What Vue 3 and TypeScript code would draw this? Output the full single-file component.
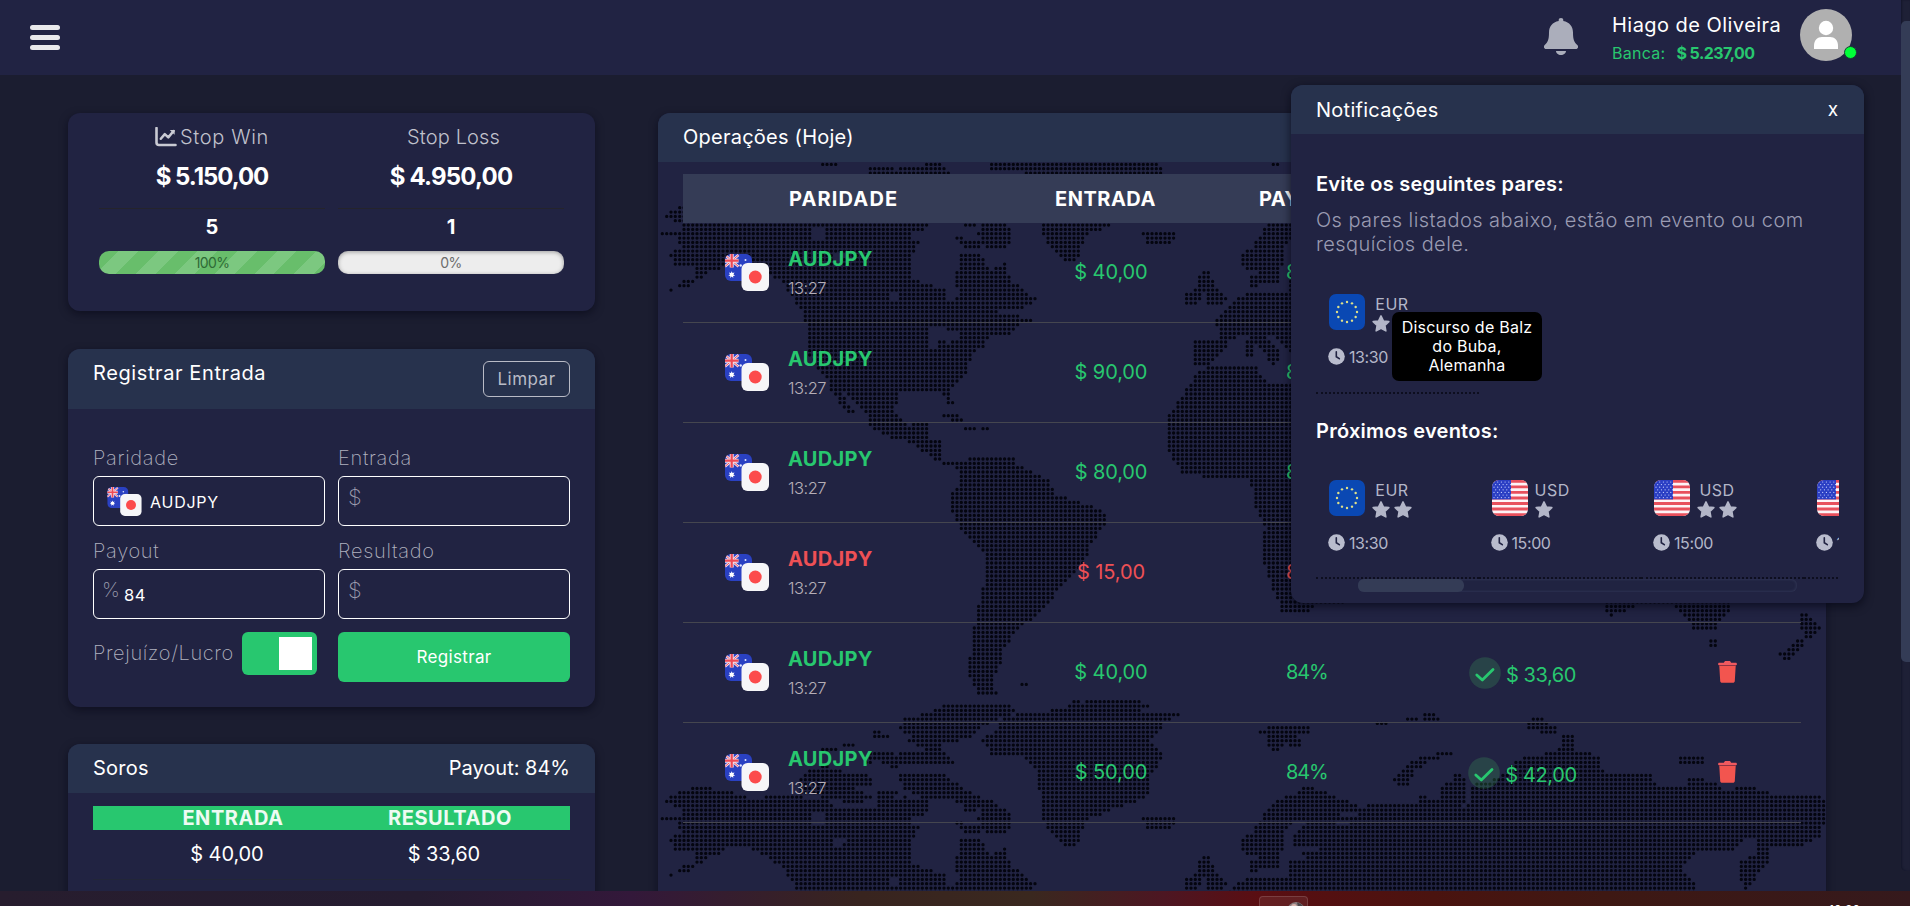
<script setup lang="ts">
type Point = [number, number]

interface Operation {
  entry: string
  payout: string
  result: string
  win: boolean
}

interface MarketEvent {
  currency: 'EUR' | 'USD'
  stars: number
  time: string
}

const operations: Operation[] = [
  { entry: '$ 40,00', payout: '84%', result: '$ 33,60', win: true },
  { entry: '$ 90,00', payout: '84%', result: '$ 75,60', win: true },
  { entry: '$ 80,00', payout: '84%', result: '$ 67,20', win: true },
  { entry: '$ 15,00', payout: '84%', result: '$ 15,00', win: false },
  { entry: '$ 40,00', payout: '84%', result: '$ 33,60', win: true },
  { entry: '$ 50,00', payout: '84%', result: '$ 42,00', win: true },
]

const avoid: MarketEvent[] = [{ currency: 'EUR', stars: 2, time: '13:30' }]
const upcoming: MarketEvent[] = [
  { currency: 'EUR', stars: 2, time: '13:30' },
  { currency: 'USD', stars: 1, time: '15:00' },
  { currency: 'USD', stars: 2, time: '15:00' },
  { currency: 'USD', stars: 2, time: '15:00' },
]

/* Dotted world map: land outlines on a 270 x 135 grid. */
const land: Point[][] = [
  // North America
  [[1.6, 24], [5.8, 21.5], [9, 20.6], [16, 21.5], [22, 23.5], [28, 22.5], [33, 23], [39, 24], [40.5, 26], [47, 26], [53, 24.6], [57, 23], [62, 23.5], [62, 26], [60, 30], [58, 34], [58, 38], [66, 41], [67, 44], [69, 44], [69.6, 41.6], [69, 38.5], [70, 33], [74.5, 33], [76.5, 37], [80, 34.7], [81, 38.5], [85, 41.6], [87, 43], [86, 44.7], [78.5, 46], [83, 47], [89, 49], [84.7, 48], [81, 51], [76.5, 51.6], [75, 54], [72, 56], [71, 60], [67, 64], [68, 68], [66.7, 67], [65.7, 64.3], [59, 64.3], [55, 65], [54.5, 69], [57, 72.4], [61, 71.4], [62.3, 72.4], [62, 75], [65, 76], [64.8, 79.7], [67.7, 80.8], [71.5, 81], [70, 82.3], [65.7, 81], [62.8, 79], [58, 76], [53.6, 75], [49, 72.8], [48.7, 69.7], [44.4, 65.5], [40.5, 62.8], [37.6, 60], [34.7, 56], [34.7, 49], [32.7, 44.7], [28.8, 39.3], [26, 37], [21.6, 34.8], [17, 34], [12.4, 37], [9, 36], [4, 35], [2.8, 32.3], [5.5, 31], [4.7, 29], [0.7, 28.3], [0.7, 27.4], [5.5, 27.4], [5.5, 26]],
  [[39.4, 62.8], [41.5, 64], [43.5, 67], [45.5, 69], [44.5, 69.6], [41, 65.5]],
  // Aleutian islands
  [[8.6, 36.3], [12.4, 36.3], [10.3, 38.4], [8.6, 38.4]],
  [[6.6, 38.5], [8.5, 38.5], [6.5, 40.4], [4.6, 40.4]],
  [[2.5, 40.5], [3.5, 40.5], [3.5, 41.5], [2.5, 41.5]],
  // Arctic archipelago
  [[66.6, 1.6], [81, 1.6], [82, 3.5], [75.5, 6.3], [71.6, 9.4], [67.8, 10.4], [64, 11.4], [67.8, 14.4], [67.8, 15.4], [57.8, 15.4], [56, 12.6], [62, 12.6], [62, 11.4], [56, 10.5], [60, 9.4], [56, 7.6], [57, 4.6], [63.5, 3.5], [64, 2.5]],
  [[33.5, 17.3], [39, 15.8], [44, 17.7], [48.5, 17.3], [49.3, 20.4], [46, 20.4], [44, 21.6], [49.4, 22.4], [49.3, 23.4], [45.5, 24.6], [40, 23.4], [32.4, 22.3]],
  [[55.5, 17.5], [61, 17.5], [66, 18], [71, 21.5], [77, 24], [82, 27.3], [80, 31.5], [76, 31.4], [74, 28.5], [75, 25.4], [70, 24.4], [65.5, 23], [62, 23.4], [57, 21.5]],
  [[50.5, 21.4], [55, 21.4], [53.6, 24.5], [51, 25.5]],
  [[37.6, 11.6], [40.5, 11.6], [42, 12.6], [37.6, 12.6]],
  [[42.6, 10.4], [45.5, 10.4], [45.5, 11.4], [42.6, 11.4]],
  [[49.6, 7.6], [52.6, 8.6], [54.6, 9.5], [49.6, 9.5]],
  [[49, 12.6], [53, 12.6], [58, 14.6], [55, 16.4], [51, 14.5], [48, 15.5]],
  [[71, 24.6], [73.4, 24.6], [73.4, 26.4], [71, 26.4]],
  [[68.6, 28.6], [73.5, 29.6], [74.5, 31.4], [70.6, 31.4]],
  // Greenland
  [[73.8, 10.4], [78.8, 7.6], [78.8, 5.6], [80.8, 4.4], [86, 3.4], [95, 2.6], [96, 0.4], [97.8, 1.4], [99, 1.4], [99.5, 0.4], [109.4, 0.4], [112.8, 1.6], [112.8, 2.6], [110, 3.4], [120, 3.4], [120, 4.5], [117, 5.4], [116, 7.4], [113, 9.6], [115.7, 12.7], [115.7, 15], [112.8, 18.5], [113.8, 20.8], [111.4, 23.8], [104.6, 25.8], [98.7, 28.3], [97.3, 32], [96.3, 35], [93, 33.7], [90, 30], [88.5, 26], [89, 22.7], [87.6, 21], [87.6, 16.5], [84.7, 13.5], [76.4, 13.4], [77, 11.6]],
  // Iceland and British Isles
  [[111.5, 27.4], [113.5, 27.4], [118.5, 27.2], [119.4, 28.6], [118.4, 30.4], [113.5, 30.4]],
  [[126.6, 36.3], [128.4, 40], [131, 42.7], [129.8, 45], [126, 45], [127.4, 42.4], [125, 40], [125, 37.6]],
  [[122.3, 41.5], [125.5, 40.4], [125, 43.6], [122.3, 44.6]],
  // Scandinavia, Europe, Asia
  [[138.5, 29], [141, 26], [143, 23.5], [147, 22.4], [149.7, 20.7], [155, 22.3], [161.2, 25], [162.3, 26.4], [157.4, 26.4], [158, 28], [161, 27.7], [164.3, 24.4], [175.8, 24.4], [175.5, 22.3], [179, 23.5], [181, 24], [180.6, 20.8], [183, 19.4], [184.7, 17.5], [185.8, 18.5], [186.2, 23], [185.4, 26], [187.4, 24], [187.4, 20.4], [193.5, 18.8], [198, 14.5], [206.6, 12.6], [209, 11.2], [212.8, 12.5], [217.8, 13.5], [216.6, 16.3], [219.7, 17.5], [229, 17.5], [230.5, 20.8], [237.4, 20.6], [237.8, 18.6], [242.8, 19.2], [245.8, 21.4], [252, 20.6], [257.4, 22.6], [262, 22.4], [267.4, 22.7], [270, 24.6], [269.5, 27.5], [267.8, 32.4], [262.8, 34.4], [259.4, 34], [256.6, 35], [255.8, 37.9], [253, 42], [251.2, 44.4], [250.3, 43], [250.3, 38], [253.5, 36], [254.3, 32.6], [250.8, 32.4], [248, 35.8], [240.5, 35.2], [235.5, 39.5], [239.7, 43], [239, 50], [231, 56], [226, 66], [214, 74], [205, 78], [196, 66], [185, 77], [176, 63], [164, 60], [160, 64], [154, 57], [149, 58], [145, 54], [141.5, 51.4], [139.6, 51.4], [143, 54.4], [143, 57.4], [141.5, 58.4], [140.5, 56], [136, 51.4], [131.7, 52.4], [130.3, 54.7], [127.4, 58.2], [123.5, 58], [123.5, 52.3], [129.8, 52.3], [130.2, 50.5], [128.6, 48.6], [131.7, 45.3], [133.4, 43], [137.4, 41.5], [146.2, 41], [146.2, 37.6], [149.7, 37.6], [149, 35.5], [153, 35.4], [153, 34.5], [146.4, 34.4], [146.4, 32.3], [149.7, 28.8], [147, 28.6], [143.7, 31], [143.7, 36], [142.5, 40], [139.7, 39.4], [138, 36.4], [134.4, 35.8], [134.4, 32.4], [138, 31]],
  [[136.6, 38], [139, 37.6], [138.5, 40.4], [136.4, 40.4]],
  [[136.2, 52.6], [137.4, 52.6], [137.4, 56.4], [136.2, 56.4]],
  // Svalbard, Franz Josef, Novaya Zemlya, Severnaya Zemlya
  [[138.3, 7.4], [142.8, 6.6], [150.8, 6.5], [149.7, 8.4], [145.8, 9.4], [143.8, 11.4], [142.8, 12.4], [141, 11.4], [141, 9.4]],
  [[146.3, 9.6], [148.4, 9.6], [148.4, 11.4], [146.3, 11.4]],
  [[165.4, 5.6], [168.4, 5.6], [168.4, 6.4], [165.4, 6.4]],
  [[172.4, 4.6], [175.4, 4.6], [175.4, 5.4], [172.4, 5.4]],
  [[176.4, 3.6], [179.4, 3.6], [180.5, 5.4], [176.4, 5.4]],
  [[182.8, 13.4], [177.6, 14.6], [174, 17.3], [172.8, 20.8], [169.7, 19.8], [173, 15.4], [176.6, 13.6], [182.8, 12.5]],
  [[200.2, 7.4], [201.5, 5.5], [202.8, 4.5], [205, 5.6], [207.3, 7], [206.6, 8.4], [204, 8.4], [203, 7.4]],
  [[208, 9.4], [209, 8.5], [211.4, 8.5], [211.4, 11.4], [209, 11.4], [209, 10.4]],
  [[236.2, 13.5], [241, 13.5], [241, 15.4], [236.2, 15.4]],
  // Africa
  [[130.8, 58.5], [137.6, 58.3], [140.5, 63], [146, 63], [166, 64], [176, 77], [184, 78], [178, 90], [170, 98], [170, 106], [158, 113], [151.6, 113.4], [150, 115.4], [144.3, 115.4], [141.5, 108.5], [139.5, 102.4], [140.5, 95.5], [137.6, 90], [137, 84], [127, 84.3], [121, 83], [118, 77.8], [118, 70], [123.4, 62.4], [125, 59.3]],
  // South America
  [[69.4, 81.5], [72, 79.5], [82, 80], [83, 81.6], [90, 84.6], [91, 87.8], [96.8, 89.7], [103, 92.2], [103.2, 94.7], [100, 99.3], [97.8, 104], [94, 107.8], [89, 114.7], [82, 120], [81, 122.8], [78.8, 124], [79.3, 126], [76.9, 130.8], [76.9, 133.4], [79, 134.6], [74.5, 134.6], [72, 130], [72.5, 123], [73.5, 117], [75.4, 109], [75.4, 101.6], [70, 96], [67.6, 91.6], [67.6, 88.5], [70, 86]],
  [[83.5, 131.5], [85.5, 131.5], [85.5, 132.5], [83.5, 132.5]],
  // Caribbean
  [[65.5, 69.6], [68.4, 69.6], [70.4, 71.4], [68, 71.4]],
  [[70.4, 72.6], [73.6, 72.6], [73.6, 73.5], [70.4, 73.5]],
  [[74.4, 72.6], [76.4, 72.6], [76.4, 73.5], [74.4, 73.5]],
  // Oceania
  [[219.4, 116.4], [216, 103], [228, 94], [236, 92], [240, 96], [243, 90], [251, 103], [246.5, 116], [243.4, 119.4], [239.6, 119.4], [234, 113], [227, 113.4]],
  [[242.4, 121.5], [244.5, 121.5], [244.5, 123.5], [242.4, 123.5]],
  [[264, 115.5], [268.3, 118.5], [265.5, 121.4], [264, 119]],
  [[263.6, 121], [264.4, 123], [260.5, 126.6], [258.5, 125.5], [262, 123]],
]

const lakes: Point[][] = [
  [[62.5, 49], [66, 50], [70, 51.4], [67, 53.4], [65, 51.4], [64.4, 54.4], [62.6, 54.4]],
  [[35.6, 26.6], [38.5, 26.6], [38.5, 29.4], [35.6, 29.4]],
  [[41, 32.6], [43.4, 32.6], [42.4, 34.4], [40.6, 34.4]],
  [[53.6, 41.6], [55.4, 41.6], [55.4, 43.4], [53.6, 43.4]],
  [[59, 27.6], [61, 27.6], [61, 29.4], [59, 29.4]],
  [[157, 28.6], [159.6, 28.6], [159.6, 29.4], [157, 29.4]],
]

/* Columns crossed by a row, using the even-odd rule. */
function spans(shape: Point[], row: number): Point[] {
  const xs: number[] = []
  shape.forEach(([x1, y1], i) => {
    const [x2, y2] = shape[(i + 1) % shape.length]!
    if (y1 > row !== y2 > row) xs.push(x1 + ((row - y1) / (y2 - y1)) * (x2 - x1))
  })
  xs.sort((a, b) => a - b)
  const out: Point[] = []
  for (let i = 0; i + 1 < xs.length; i += 2) out.push([xs[i]!, xs[i + 1]!])
  return out
}

function buildMap(): string {
  let d = ''
  for (let row = 0; row < 135; row++) {
    const cells = new Set<number>()
    const mark = (shapes: Point[][], on: boolean) => {
      for (const shape of shapes)
        for (const [a, b] of spans(shape, row + 0.01))
          for (let c = Math.ceil(a - 0.3); c <= b + 0.3; c++) on ? cells.add(c) : cells.delete(c)
    }
    mark(land, true)
    mark(lakes, false)
    for (const c of cells) d += `M${(c * 4.333).toFixed(1)} ${(row * 4.333 - 0.6).toFixed(1)}h0`
  }
  return d
}

const mapPath = buildMap()

const euStars = Array.from({ length: 12 }, (_, i) => {
  const a = (i * Math.PI) / 6
  return { x: 18 + 10 * Math.sin(a), y: 18 - 10 * Math.cos(a) }
})
const usStars = Array.from({ length: 35 }, (_, i) => ({ x: 2 + (i % 5) * 3.7 + (Math.floor(i / 5) % 2) * 1.7, y: 2 + Math.floor(i / 5) * 2.6 }))
</script>

<template>
  <div class="screen">
    <svg class="defs" width="0" height="0" aria-hidden="true">
      <defs>
        <clipPath id="r27"><rect width="27" height="27" rx="6" /></clipPath>
        <clipPath id="r36"><rect width="36" height="36" rx="7" /></clipPath>
        <symbol id="pair" viewBox="0 0 44 37">
          <g clip-path="url(#r27)">
            <rect width="27" height="27" fill="#2a41c2" />
            <path d="M0 1l13.500 11.500M13.500 1L0 12.500" stroke="#f3dfea" stroke-width="2.600" />
            <path d="M0 1l13.500 11.500M13.500 1L0 12.500" stroke="#ee5566" stroke-width="1" />
            <path d="M6.700 0v13.500M0 6.700h13.500" stroke="#f3dfea" stroke-width="4" />
            <path d="M6.700 0v13.500M0 6.700h13.500" stroke="#ee4a55" stroke-width="2.200" />
            <path d="M6.700 17.200l.8 1.900 2-.5-1.100 1.800 1.700 1.200-2 .3.200 2-1.600-1.300-1.600 1.300.2-2-2-.3 1.700-1.200-1.100-1.800 2 .5z" fill="#fff" />
            <circle cx="20.500" cy="6" r="1" fill="#e4e8ff" />
            <circle cx="15.700" cy="11.500" r="1.200" fill="#e4e8ff" />
            <circle cx="24" cy="9.500" r=".8" fill="#e4e8ff" />
          </g>
          <rect x="16.500" y="9" width="27.500" height="28" rx="6" fill="#f6f6f8" />
          <circle cx="30.300" cy="23" r="6.400" fill="#fc4b4c" />
        </symbol>
        <symbol id="flag-EUR" viewBox="0 0 36 36">
          <rect width="36" height="36" rx="7" fill="#0a48b3" />
          <circle v-for="(s, i) in euStars" :key="i" :cx="s.x" :cy="s.y" r="1.200" fill="#dfe08a" />
        </symbol>
        <symbol id="flag-USD" viewBox="0 0 36 36">
          <g clip-path="url(#r36)">
            <rect width="36" height="36" fill="#fdf3f5" />
            <path d="M0 1.400h36M0 6.900h36M0 12.400h36M0 18h36M0 23.500h36M0 29h36M0 34.600h36" stroke="#e8505c" stroke-width="2.800" />
            <rect width="19" height="19.400" fill="#2b3fc4" />
            <circle v-for="(s, i) in usStars" :key="i" :cx="s.x" :cy="s.y" r=".6" fill="#c9d2ff" />
          </g>
        </symbol>
        <symbol id="star" viewBox="0 0 24 24">
          <path d="M12 1.200l3.200 6.700 7.300.9-5.300 5 1.300 7.400L12 17.800l-6.500 3.400 1.300-7.400-5.300-5 7.300-.9z" fill="#b3b6c8" stroke="#b3b6c8" stroke-width="2" stroke-linejoin="round" />
        </symbol>
        <symbol id="clock" viewBox="0 0 17 17">
          <circle cx="8.500" cy="8.500" r="8.300" fill="#b9bccd" />
          <path d="M8.300 3.800v4.900l3 2" fill="none" stroke="#212342" stroke-width="1.600" stroke-linecap="round" />
        </symbol>
      </defs>
    </svg>

    <div class="page">
      <header class="topbar">
        <div class="burger"><i /><i /><i /></div>
        <div class="user">
          <svg class="bell" viewBox="0 0 34 37">
            <path d="M17 0c1.500 0 2.300.9 2.300 2.200v.7C25.500 4 29 8.300 29 14.500c0 7.500 1.300 9.600 4.300 12.600 1.600 1.700.5 3.900-1.400 3.900H2.100C.2 31-.9 28.800.7 27.100 3.700 24.100 5 22 5 14.500 5 8.300 8.500 4 14.700 2.900v-.7C14.700.9 15.500 0 17 0zM12 33h10c0 2.300-2.200 4-5 4s-5-1.700-5-4z" fill="#abaebb" />
          </svg>
          <div class="who">
            <span class="name">Hiago de Oliveira</span>
            <span class="bank"><span>Banca:</span><b>$ 5.237,00</b></span>
          </div>
          <div class="avatar">
            <svg viewBox="0 0 52 52">
              <circle cx="26" cy="26" r="26" fill="#b0b0b0" />
              <circle cx="26" cy="19" r="7.200" fill="#fff" />
              <path d="M14 40v-3.500C14 31.300 17.500 28 22 28h8c4.500 0 8 3.300 8 8.500V40z" fill="#fff" />
            </svg>
            <i class="online" />
          </div>
        </div>
      </header>

      <main class="content">
        <aside class="left">
          <section class="card stops">
            <div class="stop">
              <h4 class="stop-title win">
                <svg width="22" height="20" viewBox="0 0 22 20"><path d="M1.500 1v14.500a2.500 2.500 0 0 0 2.500 2.500h16.500" fill="none" stroke="#c9cad3" stroke-width="2.600" stroke-linecap="round" /><path d="M5.800 11.700l4-4.600 3.500 3.300L18.600 4" fill="none" stroke="#c9cad3" stroke-width="2.500" stroke-linecap="round" stroke-linejoin="round" /><path d="M14.800 3h4.800v4.800z" fill="#c9cad3" /></svg>
                <span>Stop Win</span>
              </h4>
              <b class="price low">$ 5.150,00</b>
              <span class="count">5</span>
              <div class="bar full"><span>100%</span></div>
            </div>
            <div class="stop">
              <h4 class="stop-title loss-title">Stop Loss</h4>
              <b class="price">$ 4.950,00</b>
              <span class="count">1</span>
              <div class="bar"><span>0%</span></div>
            </div>
          </section>

          <section class="card register">
            <div class="head tall"><span class="reg-title">Registrar Entrada</span><button class="clear">Limpar</button></div>
            <div class="form">
              <div class="field">
                <label>Paridade</label>
                <div class="box"><svg class="mini" viewBox="0 0 44 37"><use href="#pair" /></svg><span class="value">AUDJPY</span></div>
              </div>
              <div class="field"><label>Entrada</label><div class="box money"><span class="unit">$</span></div></div>
              <div class="field"><label>Payout</label><div class="box pct"><span class="unit">%</span><span class="num">84</span></div></div>
              <div class="field"><label>Resultado</label><div class="box money"><span class="unit">$</span></div></div>
              <div class="toggle-row"><span class="lucro">Prejuízo/Lucro</span><div class="toggle"><i /></div></div>
              <button class="submit">Registrar</button>
            </div>
          </section>

          <section class="card soros">
            <div class="head"><span>Soros</span><span class="payout">Payout: 84%</span></div>
            <div class="soros-head"><span>ENTRADA</span><span>RESULTADO</span></div>
            <div class="soros-row"><span>$ 40,00</span><span>$ 33,60</span></div>
          </section>
        </aside>

        <section class="card ops">
          <svg class="map" viewBox="0 0 1168 778" width="1168" height="778">
            <path id="world" :d="mapPath" fill="none" stroke="#04050f" stroke-width="3.300" stroke-linecap="round" />
            <use href="#world" y="585" />
          </svg>
          <div class="head ops-head"><span>Operações (Hoje)</span></div>
          <div class="table">
            <div class="row thead"><span /><span class="th-p">PARIDADE</span><span class="th-e">ENTRADA</span><span class="th-pay">PAYOUT</span><span class="th-r">RESULTADO</span><span /></div>
            <div v-for="(op, i) in operations" :key="i" class="row line" :class="{ loss: !op.win }">
              <svg class="pair" width="44" height="37" viewBox="0 0 44 37"><use href="#pair" /></svg>
              <div class="asset"><b>AUDJPY</b><small>13:27</small></div>
              <span class="entry">{{ op.entry }}</span>
              <span class="pay">{{ op.payout }}</span>
              <div class="result">
                <svg width="32" height="32" viewBox="0 0 32 32"><circle cx="16" cy="16" r="15.800" fill="#3fa35a" fill-opacity=".25" /><path d="M7.800 18l5.500 5L24 12.500" fill="none" stroke="currentColor" stroke-width="2.800" stroke-linecap="round" stroke-linejoin="round" /></svg>
                <span>{{ op.result }}</span>
              </div>
              <svg class="trash" width="19" height="22" viewBox="0 0 19 22"><path d="M7 0h5l1.200 1.700h4.600c.6 0 1 .4 1 1V4H.2V2.700c0-.6.4-1 1-1h4.600z" fill="#f05a5f" /><path d="M1.300 5h16.400l-.9 15c0 1.100-.9 1.800-1.900 1.800H4.100c-1 0-1.900-.7-1.900-1.800z" fill="#f2554f" /><path d="M.8 4.500h17.400" stroke="#8d3444" stroke-width="1" /></svg>
            </div>
          </div>
        </section>
      </main>
    </div>

    <section class="notice">
      <div class="head"><span class="n-title">Notificações</span><span class="close">x</span></div>
      <div class="n-body">
        <h5>Evite os seguintes pares:</h5>
        <p>Os pares listados abaixo, estão em evento ou com resquícios dele.</p>
        <div class="events first">
          <div v-for="(e, i) in avoid" :key="i" class="event">
            <div class="ev-top">
              <svg class="flag" viewBox="0 0 36 36"><use :href="'#flag-' + e.currency" /></svg>
              <div class="info"><span>{{ e.currency }}</span><div class="stars"><svg v-for="n in e.stars" :key="n" viewBox="0 0 24 24"><use href="#star" /></svg></div></div>
            </div>
            <div class="ev-time"><svg viewBox="0 0 17 17"><use href="#clock" /></svg><span>{{ e.time }}</span></div>
            <div class="tip">Discurso de Balz<br />do Buba,<br />Alemanha</div>
          </div>
        </div>
        <h5 class="next">Próximos eventos:</h5>
        <div class="events">
          <div v-for="(e, i) in upcoming" :key="i" class="event">
            <div class="ev-top">
              <svg class="flag" viewBox="0 0 36 36"><use :href="'#flag-' + e.currency" /></svg>
              <div class="info"><span>{{ e.currency }}</span><div class="stars"><svg v-for="n in e.stars" :key="n" viewBox="0 0 24 24"><use href="#star" /></svg></div></div>
            </div>
            <div class="ev-time"><svg viewBox="0 0 17 17"><use href="#clock" /></svg><span>{{ e.time }}</span></div>
          </div>
        </div>
        <div class="hscroll"><i /></div>
      </div>
    </section>

    <div class="vscroll"><i /></div>
    <footer class="taskbar">
      <div class="app"><svg width="20" height="11" viewBox="0 0 20 11"><circle cx="10" cy="10" r="9" fill="#8c7f80" /><circle cx="8" cy="6" r="3" fill="#d9b3ac" /><path d="M11 1.500a9 9 0 0 1 7.500 7L13 9z" fill="#4c4549" /></svg></div>
      <span class="clock">10:30</span>
    </footer>
  </div>
</template>

<style>
html,
body {
  background: #1b1d30;
  overflow: hidden;
}
</style>

<style scoped>
.screen {
  position: relative;
  width: 1910px;
  height: 906px;
  overflow: hidden;
  background: #1b1d30;
  color: #fff;
  font-family: Inter, 'Noto Sans', sans-serif;
  font-size: 20px;
  line-height: 24px;
}
.screen * { box-sizing: border-box; }
svg { display: block; flex: none; }
.defs { position: absolute; }
.page { height: 891px; overflow: hidden; }
.topbar {
  width: 1901px;
  height: 75px;
  padding: 0 49px 0 30px;
  display: flex;
  justify-content: space-between;
  background: #212343;
}
.burger { width: 30px; height: 25px; margin-top: 25px; display: flex; flex-direction: column; justify-content: space-between; }
.burger i { height: 5px; border-radius: 3px; background: #e9e9ec; }
.user { display: flex; }
.bell { width: 34px; height: 37px; margin: 18px 35px 0 0; }
.who { width: 188px; display: flex; flex-direction: column; padding-top: 13px; }
.bell { margin-right: 34px; }
.name { letter-spacing: .46px; }
.bank { display: flex; gap: 11px; margin-top: 5px; font-size: 16px; letter-spacing: .27px; line-height: 22px; color: #28c76f; }
.bank b { letter-spacing: -.55px; }
.avatar { position: relative; width: 52px; height: 52px; margin-top: 9px; }
.avatar svg { width: 52px; height: 52px; }
.online { position: absolute; right: -5px; bottom: 2px; width: 13px; height: 13px; border-radius: 50%; background: #00ff38; border: 1px solid #1b3b35; }

.content { display: flex; gap: 63px; padding: 38px 0 0 68px; }
.left { width: 527px; display: flex; flex-direction: column; gap: 38px; }
.card { background: #212342; border-radius: 12px; box-shadow: 0 3px 8px rgba(5, 6, 20, .55); }
.head { height: 49px; padding: 0 25px 1px; display: flex; align-items: center; justify-content: space-between; background: #27324d; border-radius: 12px 12px 0 0; letter-spacing: .24px; }
.stops { height: 198px; display: flex; gap: 13px; padding: 12px 31px 0; }
.stop { width: 226px; display: flex; flex-direction: column; align-items: center; }
.stop-title { display: flex; gap: 3px; align-items: center; margin: 0; height: 24px; font-weight: 300; color: #c0c1cc; letter-spacing: .15px; }
.stop-title.win span { letter-spacing: .66px; }
.loss-title { padding-left: 5px; }
.price { width: 100%; margin-top: 16px; padding-bottom: 19px; border-bottom: 1px solid #25242c; text-align: center; font-size: 24px; letter-spacing: -.8px; }
.price.low { letter-spacing: -1.050px; }
.count { margin-top: 6px; font-weight: 700; }
.bar { width: 100%; height: 23px; margin-top: 12px; border-radius: 10px; background: #ededed; box-shadow: inset 0 1px 4px rgba(0, 0, 0, .35); text-align: center; font-size: 14px; line-height: 23px; letter-spacing: -.6px; color: #6c6c6c; }
.bar.full { background: repeating-linear-gradient(135deg, #68be6b 0 14px, #7cc880 14px 28px); box-shadow: none; color: #2f6a36; }

.head.tall { height: 60px; padding-bottom: 0; align-items: flex-start; }
.reg-title { margin-top: 12px; letter-spacing: .6px; }
.register { height: 358px; }
.clear { width: 87px; height: 36px; margin-top: 12px; padding: 0; background: none; border: 1px solid #b9bbc6; border-radius: 6px; color: #b9bbc6; font: 17px/34px Inter, sans-serif; letter-spacing: .5px; }
.form { display: grid; grid-template-columns: 232px 232px; column-gap: 13px; padding: 38px 25px 0; }
.field { height: 93px; }
label { display: block; font-weight: 200; color: #b0b1bf; letter-spacing: .7px; line-height: 23px; }
.box { display: flex; height: 50px; margin-top: 6px; border: 1px solid #fff; border-radius: 6px; }
.mini { width: 35px; height: 29px; margin: 10px 0 0 13px; }
.value { margin: 13px 0 0 8px; font-size: 16px; letter-spacing: .75px; }
.unit { margin: 8px 0 0 9px; font-weight: 200; font-size: 22px; color: #9a9bad; }
.num { margin: 13px 0 0 5px; font-size: 16.500px; letter-spacing: .5px; }
.pct .unit { margin-left: 8px; font-size: 20px; letter-spacing: -.8px; }
.toggle-row { display: flex; margin-top: -1px; }
.lucro { margin-top: 9px; width: 149px; font-weight: 200; color: #b0b1bf; letter-spacing: .62px; }
.toggle { width: 75px; height: 43px; padding: 5px; border-radius: 6px; background: #28c76f; display: flex; justify-content: flex-end; }
.toggle i { width: 33px; height: 33px; background: #fff; }
.submit { height: 50px; margin-top: -1px; padding: 0; border: 0; border-radius: 6px; background: #28c76f; color: #fff; font: 17px Inter, sans-serif; letter-spacing: .35px; }

.payout { letter-spacing: 0; }
.soros { height: 300px; margin-top: -1px; }
.soros-head { display: grid; grid-template-columns: 280px 198px; margin: 13px 25px 0; height: 24px; background: #28c76f; color: #eefbf3; font-weight: 700; letter-spacing: .55px; }
.soros-head span { text-align: center; }
.soros-head span:last-child { margin-left: -44px; }
.soros-row { display: grid; grid-template-columns: 268px 166px; margin: 12px 25px 0; height: 38px; text-align: center; letter-spacing: -.1px; border-bottom: 1px solid #222638; }

.ops { position: relative; width: 1168px; height: 800px; flex: none; }
.map { position: absolute; left: 0; top: 0; }
.ops-head, .table { position: relative; }
.table { padding: 12px 25px 0; }
.row { display: grid; grid-template-columns: 106px 219px 206px 140px 260px 187px; }
.thead { height: 49px; align-items: center; background: #353c56; font-weight: 700; }
.th-p { letter-spacing: 1.150px; }
.th-e { padding-left: 47px; letter-spacing: .5px; }
.th-pay { padding-left: 45px; letter-spacing: .4px; }
.th-r { padding-left: 110px; letter-spacing: .5px; }
.line { height: 100px; border-bottom: 1px solid #45464f; color: #28c76f; }
.line.loss { color: #ee5055; }
.pair { margin: 31px 0 0 42px; }
.asset { display: flex; flex-direction: column; padding-top: 24px; }
.asset b { margin-left: -1px; letter-spacing: .28px; }
.asset small { margin-top: 5px; margin-left: -1px; font-size: 16.500px; font-weight: 300; color: #b5aeb6; letter-spacing: -.5px; }
.entry { margin-top: 37px; text-align: center; letter-spacing: -.1px; }
.pay { margin-top: 37px; padding-left: 72px; letter-spacing: -1.100px; }
.result { display: flex; align-items: flex-start; justify-content: center; gap: 5px; padding-left: 77px; margin: 34px 0 0; }
.result span { margin-top: 6px; letter-spacing: -.4px; }
.trash { margin: 38px 0 0 104px; }

.notice { position: absolute; left: 1291px; top: 85px; width: 573px; height: 518px; background: #212342; border-radius: 12px; box-shadow: 0 3px 10px rgba(4, 5, 18, .7); }
.notice .head { padding: 1px 26px 0 25px; }
.n-title { letter-spacing: .28px; }
.close { font-size: 19px; letter-spacing: 0; }
.n-body { padding: 38px 25px 0; }
h5 { margin: 0; font-size: 20px; font-weight: 600; letter-spacing: .25px; line-height: 24px; }
.n-body p { margin: 12px 0 0; font-weight: 300; color: #9a9bb2; letter-spacing: .43px; line-height: 24px; }
.events { display: flex; width: 523px; height: 116px; margin-top: 20px; overflow: hidden; }
.events.first { height: 112px; overflow: visible; margin-top: 26px; }
.event { position: relative; flex: none; width: 162.500px; padding: 17px 0 0 12px; border-bottom: 2px dotted #0d0e1f; }
.first .event { padding-top: 12px; }
.ev-top { display: flex; height: 41px; }
.flag { width: 36px; height: 36px; margin: 0 7px 0 1px; }
.info { color: #b3b6c8; font-size: 16px; letter-spacing: .5px; line-height: 20px; text-align: center; }
.info > span { display: block; }
.stars { display: flex; gap: 4px; margin-top: 1px; }
.stars svg { width: 18px; height: 18px; }
.ev-time { display: flex; gap: 4px; align-items: center; margin-top: 13px; height: 17px; color: #b3b6c8; font-size: 16px; letter-spacing: -.4px; }
.ev-time svg { width: 17px; height: 17px; }
.tip { position: absolute; left: 76px; top: 30px; width: 150px; height: 69px; padding-top: 6px; border-radius: 7px; background: #000; text-align: center; font-size: 16px; line-height: 19px; letter-spacing: .24px; }
.next { margin-top: 25px; }
.hscroll { width: 439px; height: 13px; margin-left: 42px; border-radius: 6px; background: #202341; box-shadow: inset 0 0 3px #3a4060; }
.hscroll i { display: block; width: 106px; height: 13px; border-radius: 6px; background: #343c56; }

.vscroll { position: absolute; right: 0; top: 0; width: 9px; height: 871px; padding-top: 21px; background: #1e2036; box-shadow: inset 1px 0 2px #14162a; border-radius: 0 0 0 5px; }
.vscroll i { display: block; height: 641px; background: #343c56; border-radius: 5px 0 0 5px; }
.taskbar { position: relative; height: 15px; background: linear-gradient(90deg, #271d2e 0, #251c30 22%, #33183a 33%, #38241f 45%, #3a281f 54%, #4d1622 61%, #5a0e12 66%, #4a130f 75%, #3e1813 84%, #35191c 100%); display: flex; justify-content: space-between; overflow: hidden; padding-left: 1259px; }
.app { width: 49px; height: 24px; margin-top: 5px; padding: 4px 0 0 26px; border: 1px solid rgba(255, 255, 255, .14); border-radius: 4px; background: rgba(255, 255, 255, .07); }
.clock { margin: 13px 50px 0 0; font-size: 12px; line-height: 12px; }
</style>
